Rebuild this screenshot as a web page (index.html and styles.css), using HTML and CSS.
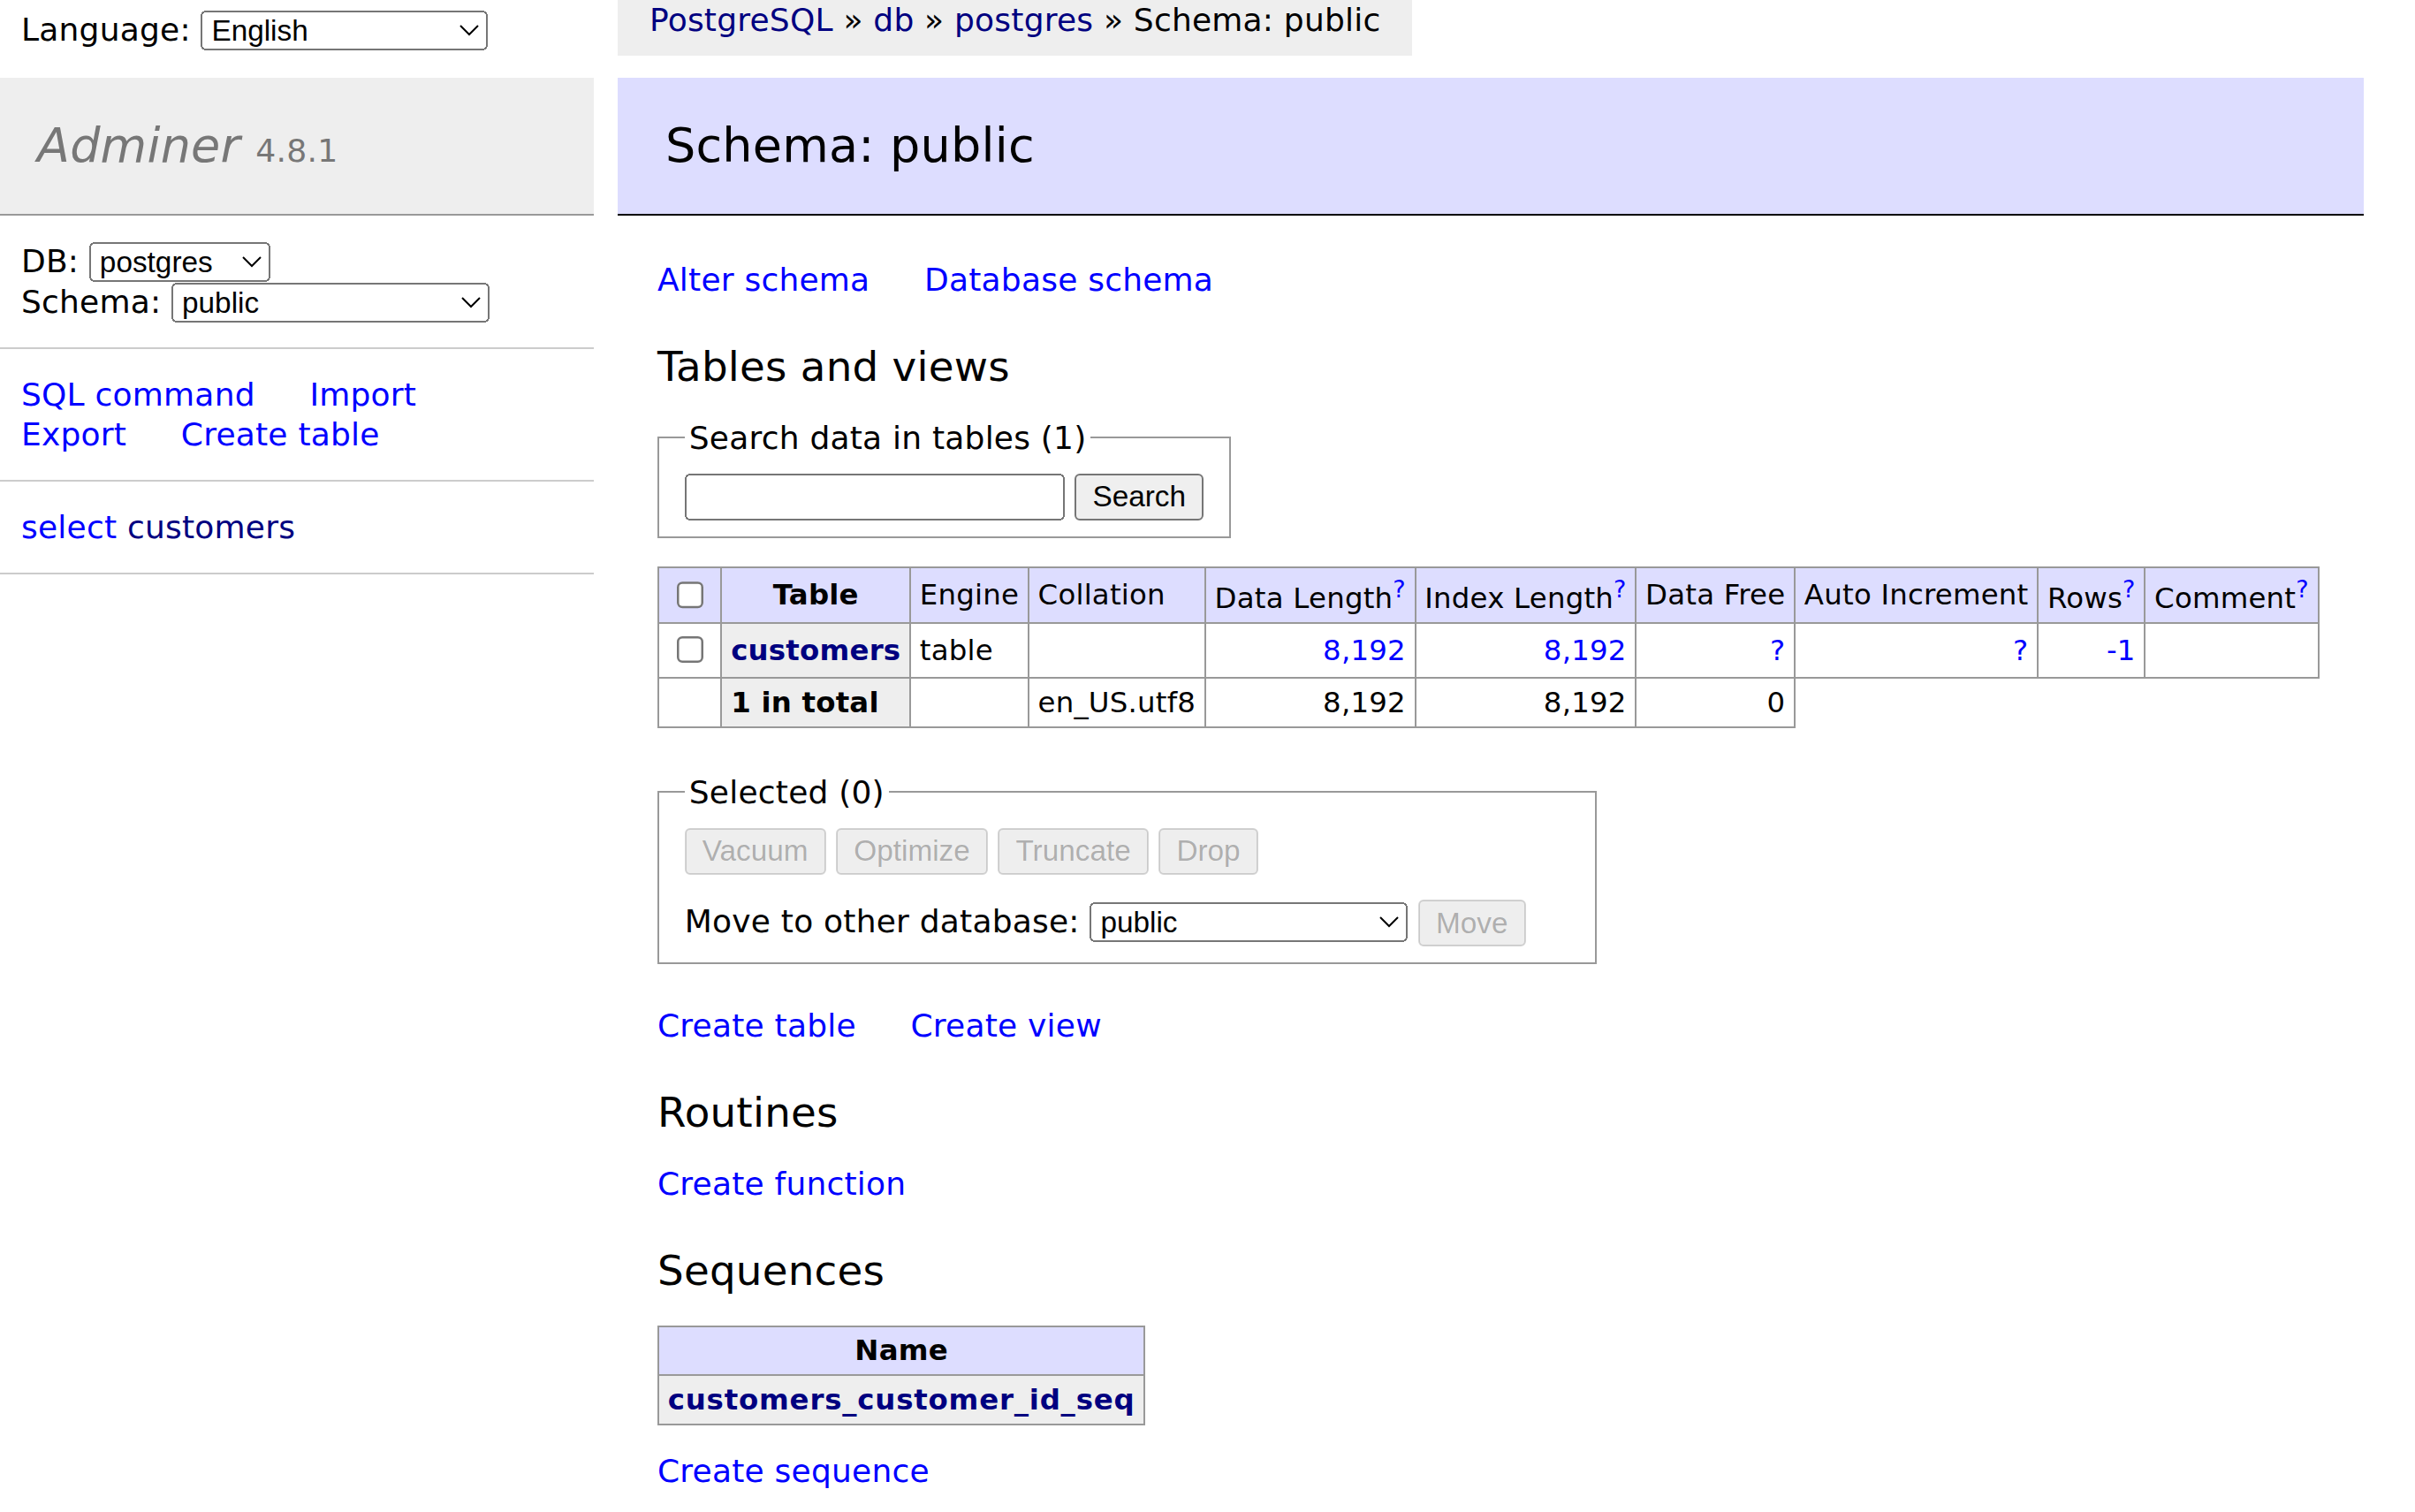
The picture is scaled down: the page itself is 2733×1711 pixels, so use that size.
FILE: index.html
```html
<!DOCTYPE html>
<html lang="en">
<head>
<meta charset="utf-8">
<title>Schema: public - PostgreSQL - Adminer</title>
<link rel="stylesheet" href="styles.css">
</head>
<body>
<div class="layout">
  <aside class="side">
    <form class="lang">Language: <select class="sel-lang"><option>English</option></select></form>
    <div class="menu">
      <h1 class="brand"><a class="brand-link" href="#">Adminer</a> <span class="version">4.8.1</span></h1>
      <form><p class="menu-block dbs">DB: <select class="sel-db"><option>postgres</option></select><br>Schema: <select class="sel-ns"><option>public</option></select></p></form>
      <p class="menu-block links"><a href="#">SQL command</a> <a href="#">Import</a> <a href="#">Export</a> <a href="#">Create table</a></p>
      <ul class="menu-block tables"><li><a href="#">select</a> <a class="v" href="#">customers</a></li></ul>
    </div>
  </aside>
  <main class="content">
    <p class="breadcrumb"><a class="v" href="#">PostgreSQL</a> » <a class="v" href="#">db</a> » <a class="v" href="#">postgres</a> » Schema: public</p>
    <h2 class="title">Schema: public</h2>
    <p class="links"><a href="#">Alter schema</a> <a href="#">Database schema</a></p>
    <h3 class="section">Tables and views</h3>
    <form>
      <fieldset class="box"><legend>Search data in tables (1)</legend><div><input type="search" class="search-input"> <input type="submit" value="Search"></div></fieldset>
      <div class="scrollable">
        <table class="grid nowrap">
          <thead>
            <tr class="wrap">
              <td><input type="checkbox"></td>
              <th>Table</th>
              <td>Engine</td>
              <td>Collation</td>
              <td>Data Length<a href="#"><sup>?</sup></a></td>
              <td>Index Length<a href="#"><sup>?</sup></a></td>
              <td>Data Free</td>
              <td>Auto Increment</td>
              <td>Rows<a href="#"><sup>?</sup></a></td>
              <td>Comment<a href="#"><sup>?</sup></a></td>
            </tr>
          </thead>
          <tbody>
            <tr>
              <td><input type="checkbox"></td>
              <th><a class="v" href="#">customers</a></th>
              <td>table</td>
              <td></td>
              <td class="number"><a href="#">8,192</a></td>
              <td class="number"><a href="#">8,192</a></td>
              <td class="number"><a href="#">?</a></td>
              <td class="number"><a href="#">?</a></td>
              <td class="number"><a href="#">-1</a></td>
              <td></td>
            </tr>
            <tr>
              <td></td>
              <th>1 in total</th>
              <td></td>
              <td>en_US.utf8</td>
              <td class="number">8,192</td>
              <td class="number">8,192</td>
              <td class="number">0</td>
            </tr>
          </tbody>
        </table>
      </div>
      <div class="footer">
        <div class="footer-inner">
          <fieldset class="box"><legend>Selected (0)</legend>
            <div>
              <input type="submit" value="Vacuum" disabled> <input type="submit" value="Optimize" disabled> <input type="submit" value="Truncate" disabled> <input type="submit" value="Drop" disabled>
              <p class="move">Move to other database: <select class="sel-target"><option>public</option></select> <input type="submit" value="Move" disabled></p>
            </div>
          </fieldset>
        </div>
      </div>
    </form>
    <p class="links"><a href="#">Create table</a> <a href="#">Create view</a></p>
    <h3 class="section">Routines</h3>
    <p class="links"><a href="#">Create function</a></p>
    <h3 class="section">Sequences</h3>
    <table class="grid">
      <thead><tr><th>Name</th></tr></thead>
      <tbody><tr><th><a class="v seq-name" href="#">customers_customer_id_seq</a></th></tr></tbody>
    </table>
    <p class="links"><a href="#">Create sequence</a></p>
  </main>
</div>
</body>
</html>
```

FILE: styles.css
```css
html {
  zoom: 2.5;
}

body {
  margin: -3.6px 0 0 -4.8px;
  color: #000;
  background: #fff;
  font: 90%/1.25 "DejaVu Sans", Verdana, sans-serif;
  letter-spacing: 0.006em;
  width: fit-content;
}

select,
input,
button {
  font-family: "Liberation Sans", Arial, sans-serif;
  font-size: 13.333px;
}

input {
  vertical-align: middle;
}

a {
  color: blue;
  text-decoration: none;
}

a.v {
  color: navy;
}

p {
  margin: .8em 20px 0 0;
}

form {
  margin: 0;
}

.layout {
  display: flex;
  align-items: flex-start;
}

/* sidebar */
.side {
  width: 19em;
  flex: 0 0 auto;
}

.lang {
  height: 2em;
  box-sizing: border-box;
  padding: .3em 1em 0;
  line-height: 1.8em;
  white-space: nowrap;
}

.sel-lang {
  width: 130px;
}

.sel-db {
  width: 82px;
}

.sel-ns {
  width: 144px;
}

.sel-target {
  width: 144px;
}

.menu {
  margin-top: 10px;
  padding: 0 0 30px 0;
}

.brand {
  font-size: 150%;
  margin: 0;
  padding: .8em 1em;
  border-bottom: 1px solid #999;
  font-weight: normal;
  color: #777;
  background: #eee;
}

.brand-link {
  color: #777;
  font-style: italic;
}

.version {
  color: #777;
  font-size: 67%;
}

.menu-block {
  padding: .8em 1em;
  margin: 0;
  border-bottom: 1px solid #ccc;
}

.dbs {
  overflow: hidden;
}

.tables {
  white-space: nowrap;
  list-style: none;
}

.links a {
  white-space: nowrap;
  margin-right: 20px;
}

/* content */
.content {
  flex: 0 0 auto;
  margin-left: 2em;
  padding: 0 20px 20px 0;
}

.breadcrumb {
  white-space: nowrap;
  width: fit-content;
  background: #eee;
  height: 2em;
  line-height: 1.8em;
  padding: 0 1em;
  margin: 0 0 0 -18px;
}

.title {
  font-size: 150%;
  margin: 10px 0 20px -18px;
  padding: .8em 1em;
  border-bottom: 1px solid #000;
  color: #000;
  font-weight: normal;
  background: #ddf;
}

.section {
  font-weight: normal;
  font-size: 130%;
  margin: 1em 0 0;
}

.box {
  display: inline-block;
  vertical-align: top;
  padding: .5em .8em;
  margin: .8em .5em 0 0;
  border: 1px solid #999;
}

.search-input {
  width: 172px;
  box-sizing: border-box;
}

.grid {
  margin: 1em 20px 0 0;
  border-collapse: collapse;
  font-size: 90%;
}

.grid td,
.grid th {
  border: 1px solid #999;
  padding: .2em .3em;
}

.grid th {
  background: #eee;
  text-align: left;
}

.grid thead th {
  text-align: center;
  padding: .2em .5em;
}

.grid thead td,
.grid thead th {
  background: #ddf;
}

.nowrap td,
.nowrap th {
  white-space: pre;
}

.nowrap .wrap td {
  white-space: normal;
}

.number {
  text-align: right;
}

.seq-name {
  letter-spacing: 0.025em;
}

.footer {
  padding-top: 20px;
  margin-right: -20px;
}

.footer-inner {
  background: #fff;
  padding: 0 0 .5em;
}

.footer .box {
  margin-top: 0;
}
```
